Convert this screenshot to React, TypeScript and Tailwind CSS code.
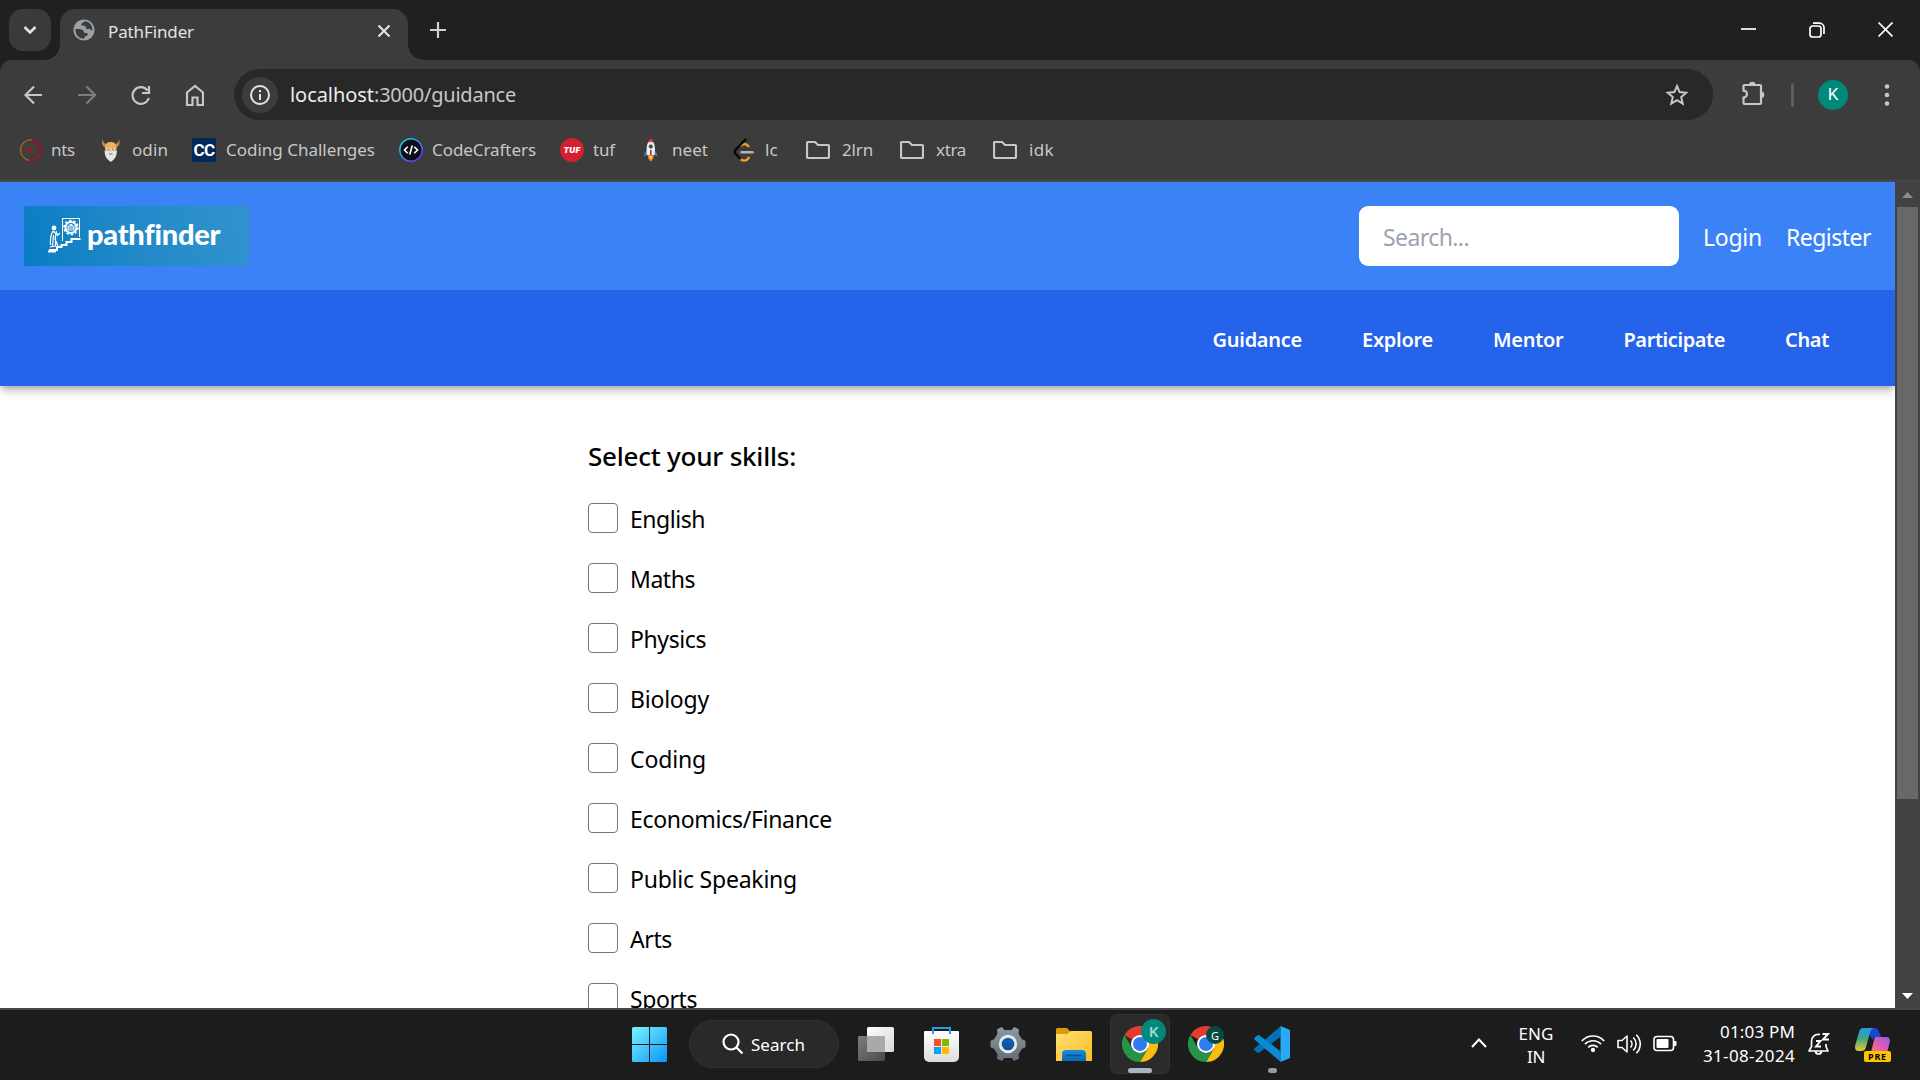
import React, { useLayoutEffect, useRef, useState } from "react";

type LabelProps = { w: number; children: string; className?: string };

/* A single line of text whose tracking is adjusted so it spans exactly `w` pixels. */
function Label({ w, children, className = "" }: LabelProps) {
  const ref = useRef<HTMLSpanElement>(null);
  const [tracking, setTracking] = useState(0);
  useLayoutEffect(() => {
    if (!ref.current) return;
    const natural = ref.current.getBoundingClientRect().width - tracking * children.length;
    setTracking((w - natural) / children.length);
  }, [w, children]);
  return (
    <span className={`block shrink-0 leading-none whitespace-nowrap ${className}`} style={{ width: w }}>
      <span ref={ref} style={{ letterSpacing: tracking }}>{children}</span>
    </span>
  );
}

function TabStrip() {
  return (
    <div className="flex h-[60px] items-start bg-[#1f2120] pt-[9px] pl-[9px]">
      <div className="flex size-[42px] items-center justify-center rounded-[14px] bg-[#3a3a3a]">
        <svg width="14" height="10" viewBox="0 0 14 10" fill="none" stroke="#e3e3e3" strokeWidth="2.6"><path d="M1.5 2 7 7.5 12.5 2" /></svg>
      </div>
      <div className="relative ml-[9px] flex h-[51px] w-[348px] rounded-t-[15px] bg-[#3c3c3c] pl-[13px]">
        <div className="absolute bottom-0 -left-[15px] size-[15px] bg-[radial-gradient(circle_at_0_0,transparent_14.5px,#3c3c3c_15px)]" />
        <div className="absolute -right-[15px] bottom-0 size-[15px] bg-[radial-gradient(circle_at_100%_0,transparent_14.5px,#3c3c3c_15px)]" />
        <svg className="mt-[10px] shrink-0" width="22" height="22" viewBox="0 0 22 22">
          <circle cx="11" cy="11" r="10.6" fill="#9aa0a6" />
          <path fill="#3c3c3c" d="M2.4 10.2c2.8-.3 6.300-.1 7.400.7 1.100.9.6 2.300 1.600 2.900 1 .5 2.600-.2 3.200.900.500 1-.2 1.900-1.300 2.200-1.500.4-1.900 1.300-2.200 2.700C6 19.700 2.500 16 2.400 10.200ZM11.500 2.300c-.5 1.500-2 1.400-2.800 2.200-.8.800-.3 2 .6 2.200 1.200.3 2.100-.4 2.900.4.800.9.300 2.200 1.400 2.800 1.300.700 2.200-.4 3.400 0 1 .400.900 1.700 2.200 1.800.9-4.900-2.700-9.200-7.700-9.400Z" />
        </svg>
        <Label w={86} className="mt-[14px] ml-[13px] text-[17px] text-[#e3e3e3]">PathFinder</Label>
        <svg className="mt-[15px] ml-[183px]" width="14" height="14" viewBox="0 0 14 14" stroke="#e3e3e3" strokeWidth="2.1"><path d="m1.500 1.500 11 11m0-11-11 11" /></svg>
      </div>
      <svg className="mt-[13px] ml-[22px]" width="16" height="16" viewBox="0 0 16 16" stroke="#d0d0d0" strokeWidth="2.200"><path d="M8 0v16M0 8h16" /></svg>
      <svg className="mt-[13px] ml-[1295px]" width="152" height="16" viewBox="0 0 152 16" fill="none" stroke="#fff" strokeWidth="1.700">
        <path d="M0 7h15" />
        <rect x="69" y="4" width="11" height="11" rx="2.500" />
        <path d="M72 1.200h6.500a4.500 4.500 0 0 1 4.500 4.500V12M137.500.500l14 14m0-14-14 14" />
      </svg>
    </div>
  );
}

function AddressRow() {
  const grey = "#c7c7c7";
  return (
    <div className="flex h-[69px] items-center pl-[24px]">
      <svg width="180" height="24" viewBox="0 0 180 24" fill="none" stroke={grey} strokeWidth="2.200" className="shrink-0">
        <path d="M18 12H2M10 3.500 1.500 12l8.500 8.500" />
        <path stroke="#7d7d7d" d="M54 12h16M62.500 3.500 71 12l-8.500 8.500" />
        <path d="M123.500 7.500A8.300 8.300 0 1 0 124.800 15M125 3v7h-7" />
        <path d="M163 9.500 171 3l8 6.500V22h-5.500v-7.500h-5V22H163Z" />
      </svg>
      <div className="ml-[30px] flex h-[51px] w-[1479px] items-center rounded-full bg-[#282828] pl-[8px]">
        <div className="flex size-[36px] items-center justify-center rounded-full bg-[#3c3c3c]">
          <svg width="22" height="22" viewBox="0 0 22 22" fill="none" stroke="#e3e3e3" strokeWidth="2"><circle cx="11" cy="11" r="9" /><path d="M11 10v6M11 6v2.200" /></svg>
        </div>
        <Label w={84} className="ml-[12px] text-[20px] text-[#ececec]">localhost</Label>
        <Label w={142} className="text-[20px] text-[#c7c7c7]">:3000/guidance</Label>
        <svg className="ml-[1149px]" width="24" height="24" viewBox="0 0 24 24" fill="none" stroke={grey} strokeWidth="2"><path d="m12 3 2.600 6.100 6.600.6-5 4.400 1.500 6.500-5.700-3.500-5.700 3.500 1.500-6.500-5-4.400 6.600-.6Z" /></svg>
      </div>
      <svg className="-mt-[3px] ml-[28px] shrink-0" width="25" height="26" viewBox="0 0 25 26">
        <path d="M3.500 5H19a1 1 0 0 1 1 1v17a1 1 0 0 1-1 1H3.500a1 1 0 0 1-1-1v-5.400a3.500 3.500 0 0 0 0-7V6a1 1 0 0 1 1-1Z" fill="none" stroke={grey} strokeWidth="2.200" />
        <path d="M8 5a3.300 3.300 0 0 1 6.600 0ZM20 11.500a3.300 3.300 0 0 1 0 6.600Z" fill={grey} />
      </svg>
      <div className="ml-[25px] h-[24px] w-[3px] rounded-full bg-[#5f5f5f]" />
      <div className="ml-[24px] flex size-[30px] items-center justify-center rounded-full bg-[#00897b] font-['Roboto'] text-[17px] leading-none text-white">K</div>
      <svg className="ml-[36px]" width="6" height="24" viewBox="0 0 6 24" fill={grey}><circle cx="3" cy="3.500" r="2.300" /><circle cx="3" cy="12" r="2.300" /><circle cx="3" cy="20.500" r="2.300" /></svg>
    </div>
  );
}

const FolderIcon = () => (
  <svg width="24" height="24" viewBox="0 0 24 24" fill="none" stroke="#c7c7c7" strokeWidth="2.200"><path d="M2 4h7l3 3h10a1 1 0 0 1 1 1v11a1 1 0 0 1-1 1H2a1 1 0 0 1-1-1V5a1 1 0 0 1 1-1Z" /></svg>
);

const bookmarks: { name: string; w: number; gap: string; icon: React.ReactNode }[] = [
  {
    name: "nts", w: 24, gap: "gap-[9px]",
    icon: (
      <svg width="24" height="24" viewBox="0 0 24 24" fill="none">
        <path d="M12 22.500A10.200 10.200 0 0 1 14 1.700" stroke="#96611f" strokeWidth="1.500" />
        <path d="M14 1.700a10.300 10.300 0 0 1-3 20.700" stroke="#a01036" strokeWidth="2" />
        <path d="M12 5v14M5 12h14M7 7l10 10M17 7 7 17" stroke="#6f3a28" strokeWidth="1.300" strokeDasharray="2.500 1" />
        <circle cx="12" cy="12" r="2.300" fill="#8a2029" />
      </svg>
    ),
  },
  {
    name: "odin", w: 36, gap: "gap-[9px]",
    icon: (
      <svg width="24" height="24" viewBox="0 0 24 24">
        <path d="M3.500 1c.500 3 1.500 4.500 4 5l8.500 0c2.500-.5 3.500-2 4-5 1.200 4 .5 7-2.500 8.500H6C3 8 2.500 5 3.500 1Z" fill="#c08a45" />
        <path d="M6 12V9c0-3 2.500-5 5.800-5s5.700 2 5.700 5v3Z" fill="#e5b267" />
        <rect x="7" y="10" width="9.500" height="5" fill="#f0c9a0" />
        <path d="M5.700 12 8 13.500h7.500l2.300-1.500c.4 5-1.300 9-6 12-4.700-3-6.500-7-6.100-12Z" fill="#e4e4e4" />
        <path d="M8.500 11.500h2m2.500 0h2M10 16h3.500" stroke="#80766c" strokeWidth="1.100" />
      </svg>
    ),
  },
  { name: "Coding Challenges", w: 149, gap: "gap-[9px]", icon: <div className="mr-[1px] flex h-[24px] w-[24px] items-center justify-center rounded-[2px] bg-[#022959] font-['Roboto'] text-[17px] leading-none font-bold tracking-[-0.5px] text-white">CC</div> },
  {
    name: "CodeCrafters", w: 104, gap: "gap-[9px]",
    icon: (
      <svg width="24" height="24" viewBox="0 0 24 24" fill="none">
        <defs><linearGradient id="ccRing" x1="0" y1="0" x2="1" y2="1"><stop stopColor="#12e4d8" /><stop offset=".5" stopColor="#3b82f6" /><stop offset="1" stopColor="#7c1ff0" /></linearGradient></defs>
        <circle cx="12" cy="12" r="11.200" fill="#0b0f19" stroke="url(#ccRing)" strokeWidth="1.500" />
        <path d="m8.700 8.800-3.200 3.200 3.200 3.200m6.600-6.400 3.200 3.200-3.200 3.200M13.300 7.500l-2.600 9" stroke="#fff" strokeWidth="1.600" />
      </svg>
    ),
  },
  { name: "tuf", w: 22, gap: "gap-[9px]", icon: <div className="flex size-[24px] items-center justify-center rounded-full bg-[#d41f30] font-['Inter'] text-[8px] leading-none font-black tracking-[0.4px] text-white italic">TUF</div> },
  {
    name: "neet", w: 36, gap: "gap-[9px]",
    icon: (
      <svg width="24" height="24" viewBox="0 0 24 24">
        <path d="M9 12c-3 2-4 4-3.800 6.500L9 16.500m5.500-4.500c3 2 4 4 3.800 6.500l-3.800-2" fill="#2f86d6" />
        <path d="M8 17c-.800-6-1-12 3.800-15.500C16.500 5 16.300 11 15.500 17Z" fill="#eef2f4" />
        <path d="M9 4.500c.700-1.700 1.700-3 2.800-3.800 1.200.8 2.200 2.100 2.900 3.800-1.900-.7-3.800-.7-5.700 0Z" fill="#e0393e" />
        <circle cx="11.800" cy="8.500" r="2" fill="#263a4d" stroke="#8da6b8" strokeWidth=".800" />
        <path d="M11 12h1.700v5H11Z" fill="#c9302c" />
        <path d="M8.700 17h6.200c.2 2.500-1.300 5-3.100 6.500-1.900-1.500-3.300-4-3.100-6.500Z" fill="#f58220" />
        <path d="M10.500 18h2.600c0 1.500-.5 2.500-1.300 3.500-.8-1-1.300-2-1.300-3.500Z" fill="#ffe14d" />
      </svg>
    ),
  },
  {
    name: "lc", w: 13, gap: "gap-[9px]",
    icon: (
      <svg width="24" height="24" viewBox="0 0 24 24" fill="none" strokeLinecap="round" strokeWidth="2.400">
        <path d="M9 7.500c2.500-2 5-2 7.500.7M8 20.500c2.500 3 6.500 3 8.700-.7" stroke="#f9a01b" />
        <path d="M13.500 1.500 3.500 12c-1 1.200-1 2.500 0 3.700L8 20.500" stroke="#050505" />
        <path d="M9.500 14.300h11" stroke="#b3b3b3" />
      </svg>
    ),
  },
  { name: "2lrn", w: 31, gap: "ml-[4px] gap-[12px]", icon: <FolderIcon /> },
  { name: "xtra", w: 30, gap: "ml-[3px] gap-[12px]", icon: <FolderIcon /> },
  { name: "idk", w: 25, gap: "ml-[3px] gap-[12px]", icon: <FolderIcon /> },
];

function Browser() {
  return (
    <header className="shrink-0 bg-[#1f2120]">
      <TabStrip />
      <div className="h-[122px] rounded-t-[12px] border-b-2 border-[#474747] bg-[#3c3c3c]">
        <AddressRow />
        <div className="flex h-[42px] items-center gap-[24px] pl-[18px]">
          {bookmarks.map((b) => (
            <div key={b.name} className={`flex items-center ${b.gap}`}>
              {b.icon}
              <Label w={b.w} className="pb-[2px] text-[17px] text-[#c7c7c7]">{b.name}</Label>
            </div>
          ))}
        </div>
      </div>
    </header>
  );
}

function Logo() {
  return (
    <div className="flex h-[60px] w-[225px] bg-[linear-gradient(75deg,#087dc2_0%,#2389c9_50%,#3193ce_100%)]">
      <svg className="mt-[11px] ml-[24px] shrink-0" width="34" height="36" viewBox="0 0 34 36" fill="none" stroke="#fff" strokeWidth="1.200">
        <path d="M14.500 24V1.500h17V20" strokeWidth="1" />
        <circle cx="23" cy="10.500" r="5.500" strokeWidth="2" />
        <circle cx="23" cy="10.500" r="7" strokeWidth="1.600" strokeDasharray="2.400 2" />
        <path d="M20 9h6v4h-6ZM20 11h6M22 9V7.500h2V9" strokeWidth="1" />
        <circle cx="6" cy="11" r="1.800" fill="#fff" />
        <path d="M5 14c-2.500 4-3 8-2.500 14M8 14l1.500 4.500 2.500-2.500M5 14l3 3-1 5 3 7M5.500 18l-1 11M2 30l6-1M7.500 20v9" strokeWidth="1.200" />
        <path d="M1 33h8v-3h4.500v-2h5v-3h5v-3h9" strokeWidth="2" />
        <path d="M0 34.500h8" strokeWidth="2" />
      </svg>
      <Label w={133} className="mt-[13px] ml-[5px] font-['Lato'] text-[29px] font-black text-white">pathfinder</Label>
    </div>
  );
}

const navItems = [
  { name: "Guidance", w: 89.500 },
  { name: "Explore", w: 71 },
  { name: "Mentor", w: 70.500 },
  { name: "Participate", w: 101.500 },
  { name: "Chat", w: 44 },
];

const skills = [
  { name: "English", w: 75 },
  { name: "Maths", w: 65 },
  { name: "Physics", w: 76 },
  { name: "Biology", w: 79 },
  { name: "Coding", w: 76 },
  { name: "Economics/Finance", w: 202 },
  { name: "Public Speaking", w: 167 },
  { name: "Arts", w: 42 },
  { name: "Sports", w: 67 },
];

function Page() {
  return (
    <div className="flex h-[826px] shrink-0 overflow-hidden">
      <div className="w-[1895px] overflow-hidden bg-white">
        <div className="relative shadow-[0_6px_9px_-1px_rgba(0,0,0,0.22),0_3px_6px_-2px_rgba(0,0,0,0.2)]">
          <div className="flex h-[108px] items-center justify-between bg-[#3b82f6] px-[24px]">
            <Logo />
            <div className="flex items-center gap-[24px]">
              <div className="flex h-[60px] w-[320px] items-center rounded-[9px] bg-white px-[24px] pt-[3px]">
                <Label w={86} className="text-[23px] text-[#9ca3af]">Search...</Label>
              </div>
              <Label w={59} className="pt-[3px] text-[23px] text-white">Login</Label>
              <Label w={85} className="pt-[3px] text-[23px] text-white">Register</Label>
            </div>
          </div>
          <nav className="flex h-[96px] items-center justify-end gap-[60px] bg-[#2563eb] pt-[3px] pr-[66px]">
            {navItems.map((n) => (
              <Label key={n.name} w={n.w} className="text-[20px] font-semibold text-white">{n.name}</Label>
            ))}
          </nav>
        </div>
        <main className="pt-[57px] pl-[588px]">
          <Label w={208} className="text-[26px] font-medium text-black">Select your skills:</Label>
          <ul className="pt-[19px]">
            {skills.map((s) => (
              <li key={s.name} className="flex h-[60px] items-center">
                <span className="mb-[1px] size-[30px] rounded-[4px] border-[1.500px] border-[#767676] bg-white" />
                <Label w={s.w} className="ml-[12px] pt-[2px] text-[23px] text-black">{s.name}</Label>
              </li>
            ))}
          </ul>
        </main>
      </div>
      <div className="flex w-[25px] flex-col items-center bg-[#424242] pt-[10px] pb-[9px]">
        <svg width="11" height="6" viewBox="0 0 11 6" fill="#8b8b8b"><path d="M0 6 5.500 0 11 6Z" /></svg>
        <div className="mt-[9px] h-[592px] w-[21px] bg-[#686868]" />
        <svg className="mt-auto" width="11" height="6" viewBox="0 0 11 6" fill="#fff"><path d="M0 0 5.500 6 11 0Z" /></svg>
      </div>
    </div>
  );
}

const ChromeIcon = () => (
  <svg width="36" height="36" viewBox="0 0 36 36">
    <path d="M18 18 2.400 9a18 18 0 0 1 31.200 0Z" fill="#e33b2e" />
    <path d="M18 9h15.600A18 18 0 0 1 18 36l7.800-13.500Z" fill="#fbbc12" />
    <path d="M2.400 9A18 18 0 0 0 18 36l7.800-13.500a9 9 0 0 1-15.600 0Z" fill="#269447" />
    <circle cx="18" cy="18" r="9" fill="#fff" />
    <circle cx="18" cy="18" r="7" fill="#2f7cf0" />
  </svg>
);

function Taskbar() {
  return (
    <footer className="flex h-[72px] shrink-0 items-start border-t-2 border-[#474747] bg-[#1c1c1c]">
      <svg className="mt-[17px] ml-[632px] shrink-0" width="35" height="35" viewBox="0 0 35 35">
        <defs><linearGradient id="win" x1="0" y1="0" x2="1" y2="1"><stop stopColor="#7af3fd" /><stop offset=".5" stopColor="#42c5fb" /><stop offset="1" stopColor="#0a93fb" /></linearGradient></defs>
        <path fill="url(#win)" d="M1.500 0H17v17H0V1.500A1.500 1.500 0 0 1 1.500 0ZM18 0h15.500A1.500 1.500 0 0 1 35 1.500V17H18ZM0 18h17v17H1.500A1.500 1.500 0 0 1 0 33.500ZM18 18h17v15.500a1.500 1.500 0 0 1-1.500 1.500H18Z" />
      </svg>
      <div className="mt-[10px] ml-[22px] flex h-[48px] w-[150px] shrink-0 items-center rounded-full border border-[#303030] bg-[#292929] pl-[32px]">
        <svg width="22" height="22" viewBox="0 0 22 22" fill="none" stroke="#fff" strokeWidth="2.200"><circle cx="9" cy="9" r="7.500" /><path d="m14.500 14.500 6 6" /></svg>
        <Label w={54} className="ml-[7px] text-[17px] text-white">Search</Label>
      </div>
      <svg className="mt-[17px] ml-[19px] shrink-0" width="36" height="35" viewBox="0 0 36 35">
        <defs>
          <linearGradient id="tvBack" x1="0" y1="0" x2="1" y2="1"><stop stopColor="#7c7c7c" /><stop offset="1" stopColor="#4a4a4a" /></linearGradient>
          <linearGradient id="tvFront" x1="0" y1="0" x2="1" y2="1"><stop stopColor="#fdfdfd" /><stop offset="1" stopColor="#d9d9d9" /></linearGradient>
        </defs>
        <rect y="9" width="27" height="25" rx="1.500" fill="url(#tvBack)" />
        <rect x="9" width="27" height="25" rx="1.500" fill="url(#tvFront)" />
        <path d="M9 9h18v16H10.500A1.500 1.500 0 0 1 9 23.500Z" fill="#a9a9a9" />
      </svg>
      <svg className="mt-[17px] ml-[30px] shrink-0" width="35" height="35" viewBox="0 0 35 35">
        <defs><linearGradient id="store" x1="0" y1="0" x2="0" y2="1"><stop stopColor="#fff" /><stop offset="1" stopColor="#dcdcdc" /></linearGradient></defs>
        <path d="M0 5a1 1 0 0 1 1-1h33a1 1 0 0 1 1 1v25a5 5 0 0 1-5 5H5a5 5 0 0 1-5-5Z" fill="url(#store)" />
        <path d="M9 7V1h17v6" fill="none" stroke="#1ca0ee" strokeWidth="2" />
        <path d="M10 12h7v7h-7Z" fill="#f25022" /><path d="M18 12h7v7h-7Z" fill="#7fba00" />
        <path d="M10 20h7v7h-7Z" fill="#00a4ef" /><path d="M18 20h7v7h-7Z" fill="#ffb900" />
      </svg>
      <svg className="mt-[16px] ml-[31px] shrink-0" width="36" height="36" viewBox="0 0 36 36">
        <defs>
          <linearGradient id="gear" x1="0" y1="0" x2="0" y2="1"><stop stopColor="#8f979f" /><stop offset="1" stopColor="#626d78" /></linearGradient>
          <linearGradient id="hub" x1="0" y1="0" x2="0" y2="1"><stop stopColor="#0c63b8" /><stop offset="1" stopColor="#0a4f9c" /></linearGradient>
        </defs>
        <path fill="url(#gear)" stroke="url(#gear)" strokeWidth="1" strokeLinejoin="round" d="M7.500 3.500 12 1.500l2 3h8l2-3 4.500 2-.5 4 3.500 6 3.500 1.500v6l-3.500 1.500-3.500 6 .5 4-4.500 2-2-3h-8l-2 3-4.500-2 .5-4-3.500-6L1 21v-6l3.500-1.500 3.500-6Z" />
        <circle cx="18" cy="18" r="9.200" fill="#e8e8e8" /><circle cx="18" cy="18" r="6.300" fill="url(#hub)" />
      </svg>
      <svg className="mt-[18px] ml-[30px] shrink-0" width="36" height="33" viewBox="0 0 36 33">
        <defs>
          <linearGradient id="fold" x1="0" y1="0" x2="1" y2="1"><stop stopColor="#ffe076" /><stop offset="1" stopColor="#fbbd20" /></linearGradient>
          <linearGradient id="foldBlue" x1="0" y1="0" x2="0" y2="1"><stop stopColor="#1390df" /><stop offset="1" stopColor="#0c65b3" /></linearGradient>
        </defs>
        <path d="M0 1.500A1.500 1.500 0 0 1 1.500 0H11l4 4v6H0Z" fill="#de9a05" />
        <path d="M0 6h11l4-3h19.500A1.500 1.500 0 0 1 36 4.500V33H0Z" fill="url(#fold)" />
        <path d="M6 33v-7a4 4 0 0 1 4-4h16a4 4 0 0 1 4 4v7Z" fill="url(#foldBlue)" />
        <path d="M11 27.500h14" stroke="#0a4f93" strokeWidth="1.600" strokeLinecap="round" />
      </svg>
      <div className="relative mt-[4px] ml-[18px] flex size-[60px] shrink-0 justify-center rounded-[7px] border border-[#343434] bg-[#2a2a2a] pt-[11px]">
        <ChromeIcon />
        <div className="absolute top-[4px] right-[3px] flex size-[25px] items-center justify-center rounded-full bg-[#00897b] text-[15px] leading-none font-semibold text-[#a9dcd6]">K</div>
        <div className="absolute bottom-0 left-[17px] h-[5px] w-[24px] rounded-full bg-[#a9b6c4]" />
      </div>
      <div className="relative mt-[16px] ml-[18px] shrink-0">
        <ChromeIcon />
        <div className="absolute top-0 left-[18px] flex size-[18px] items-center justify-center rounded-full bg-[#024d41] text-[11px] leading-none text-white">G</div>
      </div>
      <div className="relative mt-[16px] ml-[30px] h-[48px] w-[36px] shrink-0">
        <svg width="36" height="36" viewBox="0 0 36 36">
          <path d="M26.500.300v10.500L5.500 26.500a2 2 0 0 1-2.400 0L.800 24.500a1.500 1.500 0 0 1 0-2.300Z" fill="#0070b8" />
          <path d="M26.500 35.700V25.200L5.500 9.500a2 2 0 0 0-2.400 0L.800 11.500a1.500 1.500 0 0 0 0 2.300Z" fill="#0a8ad6" />
          <path d="M26.500 0 36 4v28l-9.500 4Z" fill="#29aaf4" />
        </svg>
        <div className="absolute bottom-[1px] left-[14px] h-[5px] w-[9px] rounded-full bg-[#9a9a9a]" />
      </div>
      <svg className="mt-[28px] ml-[181px] shrink-0" width="16" height="10" viewBox="0 0 16 10" fill="none" stroke="#fff" strokeWidth="2"><path d="M1 9 8 1.500 15 9" /></svg>
      <div className="mt-[15px] ml-[31px] flex w-[36px] shrink-0 flex-col items-center gap-[6px] text-[17px] text-white">
        <Label w={35}>ENG</Label>
        <Label w={18}>IN</Label>
      </div>
      <svg className="mt-[23px] ml-[27px] shrink-0" width="24" height="20" viewBox="0 0 24 20" fill="none" stroke="#fff" strokeWidth="1.700">
        <path d="M.800 8a15 15 0 0 1 22.400 0M4 11.200a11 11 0 0 1 16 0M7.200 14.300a7 7 0 0 1 9.600 0" />
        <circle cx="12" cy="17" r="1.300" fill="#fff" />
      </svg>
      <svg className="mt-[23px] ml-[12px] shrink-0" width="24" height="22" viewBox="0 0 24 22" fill="none" stroke="#fff" strokeWidth="1.600">
        <path d="M1 7.500h4L10 3v16l-5-4.500H1Z" strokeLinejoin="round" />
        <path d="M13.500 7.500a5 5 0 0 1 0 7M16.300 4.500a9 9 0 0 1 0 13M19.300 1.700a13 13 0 0 1 0 18.600" />
      </svg>
      <svg className="mt-[25px] ml-[12px] shrink-0" width="24" height="17" viewBox="0 0 24 17" fill="none">
        <rect x="1" y="1.500" width="19.500" height="14" rx="3" stroke="#fff" strokeWidth="1.600" />
        <rect x="3.500" y="4" width="12" height="9" rx="1" fill="#fff" />
        <path d="M21 6h1.500a1 1 0 0 1 1 1v3a1 1 0 0 1-1 1H21Z" fill="#fff" />
      </svg>
      <div className="mt-[13px] ml-[26px] flex w-[92px] shrink-0 flex-col items-end gap-[7px] text-[17px] text-white">
        <Label w={75}>01:03 PM</Label>
        <Label w={92}>31-08-2024</Label>
      </div>
      <svg className="mt-[22px] ml-[13px] shrink-0" width="22" height="24" viewBox="0 0 22 24" fill="none" stroke="#fff" strokeWidth="1.700">
        <path d="M12 2.500C7 1.500 3.500 5 3.500 9.500v5L1 19h19l-2-4.500V12M7.500 19.500c.500 3.300 5.500 3.300 6 0" strokeLinejoin="round" />
        <path d="M8 9h4.500L8 14.500h5M14.500 2H20l-5 5.500h6" strokeWidth="1.900" />
      </svg>
      <div className="relative mt-[18px] ml-[25px] h-[34px] w-[36px] shrink-0">
        <svg width="35" height="27" viewBox="0 0 35 27">
          <defs>
            <linearGradient id="cpA" x1="0" y1="0" x2="0" y2="1"><stop stopColor="#1e9be8" /><stop offset=".45" stopColor="#3ea68c" /><stop offset="1" stopColor="#e9c928" /></linearGradient>
            <linearGradient id="cpB" x1="1" y1="0" x2="0" y2="1"><stop stopColor="#9a57f0" /><stop offset=".5" stopColor="#e45fa8" /><stop offset="1" stopColor="#ff8a55" /></linearGradient>
          </defs>
          <path d="M8 0h12c3 0 4.500 4.500 6 9h-5c-2 0-3 1-3.500 3L16 9Z" fill="#1747cf" />
          <path d="M8 0h10.500c-2.500 1-3.300 4-4.300 7.500L11 19c-1 3-2 4-4.500 4H3.500C.500 23-.500 20.500.300 17L4 4C4.700 1.500 6 0 8 0Z" fill="url(#cpA)" />
          <path d="M21 9h10.500c3 0 4 2.500 3 6l-3 12H13c2.500-1 3-3 3.700-5.500L19 12c.500-2 1-3 2-3Z" fill="url(#cpB)" />
        </svg>
        <div className="absolute right-0 bottom-0 flex h-[11px] w-[27px] items-center justify-center rounded-[2px] bg-[#ffc400] text-[9px] leading-none font-bold tracking-[0.800px] text-black">PRE</div>
      </div>
    </footer>
  );
}

export default function App() {
  return (
    <div className="flex h-[1080px] w-[1920px] flex-col overflow-hidden bg-[#1c1c1c] font-['Noto_Sans',sans-serif]">
      <Browser />
      <Page />
      <Taskbar />
    </div>
  );
}
